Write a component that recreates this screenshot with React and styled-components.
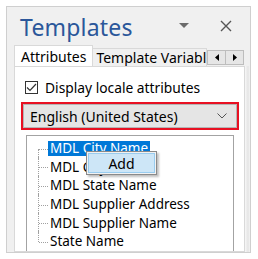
import React from 'react';
import styled, { createGlobalStyle } from 'styled-components';

const GlobalStyle = createGlobalStyle`
  html, body {
    margin: 0;
    padding: 0;
    background: #ffffff;
  }
  body {
    font-family: "Noto Sans", "DejaVu Sans", sans-serif;
  }
`;

const Page = styled.div`
  width: 258px;
  height: 259px;
  padding: 6px 0 0 6px;
  box-sizing: border-box;
`;

const Pane = styled.div`
  width: 245px;
  height: 247px;
  box-sizing: border-box;
  border: 1px solid #cfcfcf;
  background: #f0f0f0;
  overflow: hidden;
  display: flex;
  flex-direction: column;
`;

const TitleBar = styled.div`
  display: flex;
  align-items: center;
  height: 42px;
  padding: 0 14px 0 13px;
`;

const Title = styled.h1`
  flex: 1;
  margin: 2px 0 0 0;
  font-family: "Noto Sans", sans-serif;
  font-weight: 400;
  font-size: 23px;
  letter-spacing: 0.2px;
  color: #2b579a;
`;

const IconButton = styled.button`
  border: none;
  background: none;
  padding: 0;
  width: 20px;
  height: 20px;
  display: flex;
  align-items: center;
  justify-content: center;
  margin-left: ${p => p.$gap || 0}px;
`;

const TabStrip = styled.div`
  display: flex;
  align-items: flex-end;
  height: 22px;
  padding-left: 7px;
`;

const Tab = styled.div`
  height: ${p => (p.$active ? 21 : 18)}px;
  box-sizing: border-box;
  padding: 0 ${p => (p.$active ? 6 : 3)}px;
  border: 1px solid #d9d9d9;
  border-bottom: none;
  background: ${p => (p.$active ? '#ffffff' : '#f0f0f0')};
  font-size: 14px;
  color: #000;
  display: flex;
  align-items: center;
  white-space: nowrap;
  overflow: hidden;
  flex: ${p => (p.$active ? 'none' : '1')};
  min-width: 0;
  margin-left: ${p => (p.$active ? 0 : -1)}px;
`;

const Scroller = styled.div`
  display: flex;
  height: 13px;
  margin: 0 6px 1px 0;
  border: 1px solid #bdbdbd;
  background: #e6e6e6;
`;

const ScrollArrow = styled.div`
  width: 17px;
  display: flex;
  align-items: center;
  justify-content: center;
  border-left: ${p => (p.$split ? '1px solid #bdbdbd' : 'none')};
`;

const Body = styled.div`
  flex: 1;
  display: flex;
  padding-left: 7px;
`;

const TabPage = styled.div`
  width: 231px;
  box-sizing: border-box;
  border: 1px solid #d9d9d9;
  background: #ffffff;
  display: flex;
  flex-direction: column;
  padding: 13px 10px 0 10px;
`;

const SideTrack = styled.div`
  width: 6px;
  background: linear-gradient(to right, #f7f7f7, #e4e4e4 60%, #f4f4f4);
`;

const CheckRow = styled.label`
  display: flex;
  align-items: center;
  gap: 7px;
  font-size: 13.8px;
  color: #000;
  height: 14px;
`;

const CheckBox = styled.span`
  width: 13px;
  height: 13px;
  box-sizing: border-box;
  border: 1px solid #333;
  background: #fff;
  display: flex;
  align-items: center;
  justify-content: center;
`;

const Highlight = styled.div`
  margin: 8px 0 0 -4px;
  width: 218px;
  height: 28px;
  box-sizing: border-box;
  border: 2px solid #e81123;
`;

const Combo = styled.div`
  height: 100%;
  box-sizing: border-box;
  border: 1px solid #b5b5b5;
  background: #e5e5e5;
  display: flex;
  align-items: center;
  justify-content: space-between;
  padding: 0 9px 0 6px;
  font-family: "Noto Sans", sans-serif;
  font-size: 14px;
  color: #000;
`;

const Tree = styled.div`
  position: relative;
  margin: 5px 0 0 1px;
  width: 208px;
  flex: 1;
  box-sizing: border-box;
  border: 1px solid #a3a3a3;
  border-bottom: none;
  background: #fff;
  padding: 3px 0 0 11px;
`;

const TreeRow = styled.div`
  display: flex;
  align-items: center;
  height: 18.6px;
  font-family: "Noto Sans", sans-serif;
  font-size: 13.5px;
  color: #000;
`;

const Branch = styled.span`
  position: relative;
  width: 10px;
  height: 100%;
  flex: none;
  &::before {
    content: '';
    position: absolute;
    left: 0;
    top: ${p => (p.$first ? '50%' : '-1px')};
    bottom: ${p => (p.$last ? '50%' : '-1px')};
    border-left: 1px dotted #a0a0a0;
  }
  &::after {
    content: '';
    position: absolute;
    left: 1px;
    right: 0;
    top: 50%;
    border-top: 1px dotted #a0a0a0;
  }
`;

const Label = styled.span`
  padding: 0 2px;
  line-height: 15px;
  background: ${p => (p.$selected ? '#0078d7' : 'transparent')};
  color: ${p => (p.$selected ? '#fff' : '#000')};
  white-space: nowrap;
`;

const Menu = styled.div`
  position: absolute;
  left: 59px;
  top: 15px;
  width: 71px;
  height: 24px;
  box-sizing: border-box;
  border: 1px solid #8a8a8a;
  background: #f2f2f2;
  box-shadow: 2px 2px 2px rgba(0, 0, 0, 0.25);
  padding: 1px;
`;

const MenuItem = styled.div`
  height: 100%;
  box-sizing: border-box;
  border: 1px solid #99ccef;
  background: #cde6f7;
  display: flex;
  align-items: center;
  justify-content: center;
  font-family: "Noto Sans", sans-serif;
  font-size: 14px;
  color: #000;
`;

const items = [
  'MDL City Name',
  'MDL City',
  'MDL State Name',
  'MDL Supplier Address',
  'MDL Supplier Name',
  'State Name',
];

export default function App() {
  return (
    <Page>
      <GlobalStyle />
      <Pane>
        <TitleBar>
          <Title>Templates</Title>
          <IconButton>
            <svg width="10" height="6" viewBox="0 0 10 6">
              <path d="M0 0 H10 L5 5 Z" fill="#6b6b6b" />
            </svg>
          </IconButton>
          <IconButton $gap={22}>
            <svg width="12" height="12" viewBox="0 0 12 12">
              <path d="M1 1 L11 11 M11 1 L1 11" stroke="#555" strokeWidth="1.4" />
            </svg>
          </IconButton>
        </TitleBar>
        <TabStrip>
          <Tab $active>Attributes</Tab>
          <Tab>Template Variables</Tab>
          <Scroller>
            <ScrollArrow>
              <svg width="4" height="7" viewBox="0 0 4 7">
                <path d="M4 0 V7 L0 3.5 Z" fill="#000" />
              </svg>
            </ScrollArrow>
            <ScrollArrow $split>
              <svg width="4" height="7" viewBox="0 0 4 7">
                <path d="M0 0 V7 L4 3.5 Z" fill="#000" />
              </svg>
            </ScrollArrow>
          </Scroller>
        </TabStrip>
        <Body>
          <TabPage>
            <CheckRow>
              <CheckBox>
                <svg width="11" height="9" viewBox="0 0 11 9">
                  <path d="M1 4.5 L4 7.5 L10 1" stroke="#333" strokeWidth="1.2" fill="none" />
                </svg>
              </CheckBox>
              Display locale attributes
            </CheckRow>
            <Highlight>
              <Combo>
                English (United States)
                <svg width="10" height="6" viewBox="0 0 10 6">
                  <path d="M0.5 0.5 L5 5 L9.5 0.5" stroke="#555" strokeWidth="1" fill="none" />
                </svg>
              </Combo>
            </Highlight>
            <Tree>
              {items.map((name, i) => (
                <TreeRow key={name}>
                  <Branch $first={i === 0} $last={i === items.length - 1} />
                  <Label $selected={i === 0}>{name}</Label>
                </TreeRow>
              ))}
              <Menu>
                <MenuItem>Add</MenuItem>
              </Menu>
            </Tree>
          </TabPage>
          <SideTrack />
        </Body>
      </Pane>
    </Page>
  );
}
